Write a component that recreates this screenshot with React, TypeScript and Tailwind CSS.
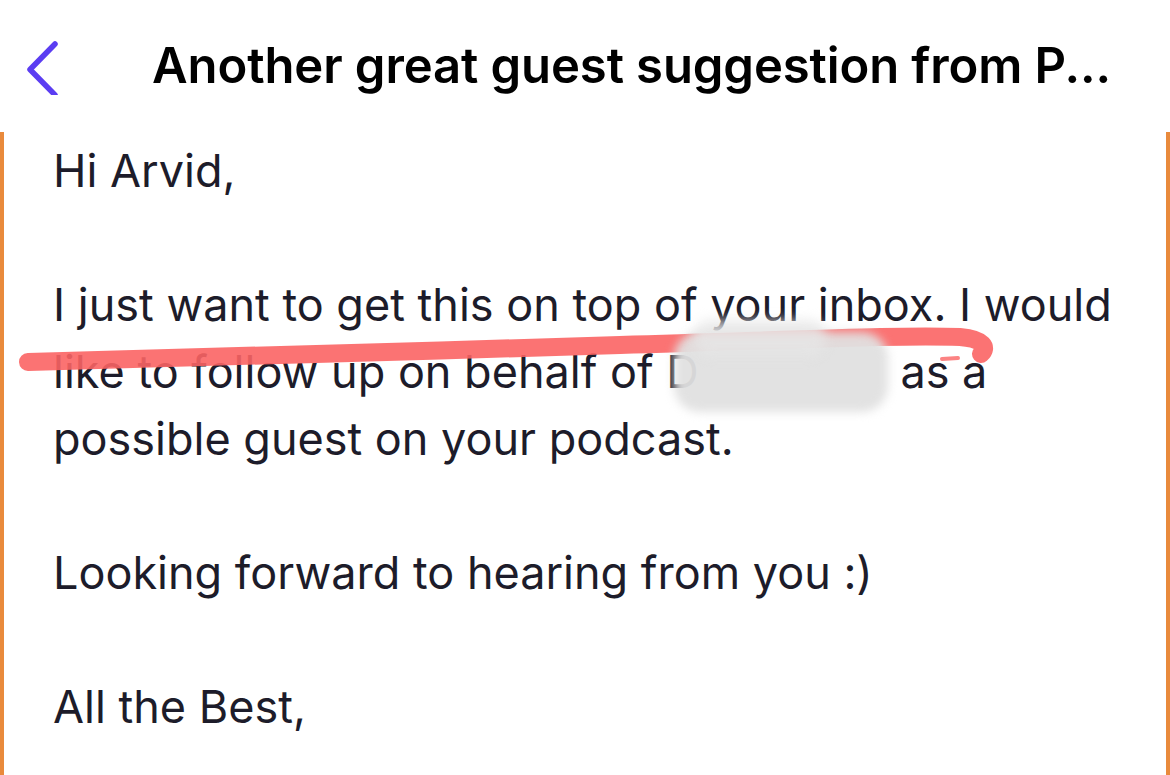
import React from "react";

const BackChevron = () => (
  <svg width="40" height="60" viewBox="0 0 40 60" fill="none">
    <path
      d="M31 9 L6 34.5 L31 60"
      stroke="#5b3df2"
      strokeWidth="5.5"
      strokeLinecap="round"
      strokeLinejoin="round"
    />
  </svg>
);

const App = () => {
  return (
    <div
      className="h-[775px] w-[1170px] overflow-hidden bg-white"
      style={{ fontFamily: "Inter, 'Noto Sans', sans-serif" }}
    >
      {/* header */}
      <header className="flex h-[132px] items-center">
        <div className="flex w-[152px] items-center pl-[24px] pb-[2px]">
          <BackChevron />
        </div>
        <h1 className="whitespace-nowrap text-[49px] font-semibold tracking-[-0.1px] text-black">
          Another great guest suggestion from P...
        </h1>
      </header>

      {/* message body */}
      <div className="relative h-[643px] border-l-4 border-r-4 border-[#e98a3c] pt-[5px] pl-[49px] text-[45px] leading-[67px] text-[#1d1c2a]">
        <p className="whitespace-nowrap">Hi Arvid,</p>
        <p className="h-[67px]" />
        <p className="whitespace-nowrap">I just want to get this on top of your inbox. I would</p>
        <p className="whitespace-nowrap">
          like to follow up on behalf of D<span className="inline-block w-[189px]" /> as a
        </p>
        <p className="whitespace-nowrap">possible guest on your podcast.</p>
        <p className="h-[67px]" />
        <p className="whitespace-nowrap">Looking forward to hearing from you :)</p>
        <p className="h-[67px]" />
        <p className="whitespace-nowrap">All the Best,</p>

        {/* hand-drawn red strike */}
        <svg
          className="pointer-events-none absolute left-[-4px] top-0"
          width="1170"
          height="643"
          viewBox="0 132 1170 643"
        >
          <path
            d="M28 362 C 200 358, 420 351, 620 345 S 900 335, 960 337 C 984 339, 988 348, 981 354"
            stroke="#fb6464"
            strokeOpacity="0.9"
            strokeWidth="18"
            strokeLinecap="round"
            fill="none"
          />
          <path d="M942 359 L958 358" stroke="#fb6464" strokeOpacity="0.8" strokeWidth="4" strokeLinecap="round" />
        </svg>

        {/* redaction smudge over the name */}
        <div className="absolute left-[670px] top-[200px] h-[80px] w-[214px] rounded-[26px] bg-[#e0e0e0]/95 blur-[5px]" />
        <div className="absolute left-[690px] top-[188px] h-[36px] w-[132px] rounded-[16px] bg-[#e6e6e6]/80 blur-[6px]" />
      </div>
    </div>
  );
};

export default App;
